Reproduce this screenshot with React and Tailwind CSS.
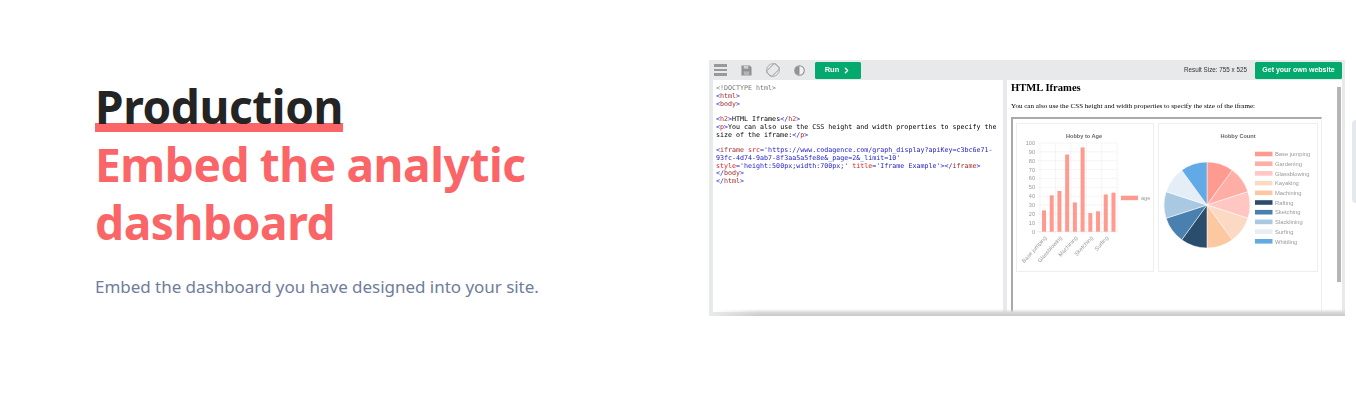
import { ChevronRight } from "lucide-react";

const sans = "font-['Noto_Sans','Open_Sans',sans-serif]";

const ageBars = [24, 41, 46, 87, 33, 95, 21, 23, 42, 44];
const ticks = [100, 90, 80, 70, 60, 50, 40, 30, 20, 10, 0];
const xLabels = [
  { name: "Base jumping", i: 0 },
  { name: "Glassblowing", i: 2 },
  { name: "Machining", i: 4 },
  { name: "Sketching", i: 6 },
  { name: "Surfing", i: 8 },
];

const slices = [
  ["Base jumping", "#fe9a8f"],
  ["Gardening", "#ffaea5"],
  ["Glassblowing", "#ffc6c2"],
  ["Kayaking", "#fbd9c3"],
  ["Machining", "#fcc8a2"],
  ["Rafting", "#2a4d6e"],
  ["Sketching", "#4a80ae"],
  ["Slacklining", "#a9c8e2"],
  ["Surfing", "#e5eef6"],
  ["Whittling", "#62aae6"],
];

function BarChart() {
  const x0 = 23;
  const y0 = 107.7;
  const h = 88.7;
  const step = 15.44;
  return (
    <svg viewBox="0 0 136 147" className="w-[136px] h-[147px] block">
      <text x="67" y="14" textAnchor="middle" fontSize="5.6" fontWeight="700" fill="#666" fontFamily="Liberation Sans">Hobby to Age</text>
      {ticks.map((t, i) => (
        <g key={t}>
          <line x1={x0 - 3} x2={x0 + 77} y1={y0 - h + i * 8.87} y2={y0 - h + i * 8.87} stroke={t === 0 ? "#ddd" : "#eee"} strokeWidth="0.6" />
          <text x={x0 - 5} y={y0 - h + i * 8.87 + 2} textAnchor="end" fontSize="5.6" fill="#999" fontFamily="Liberation Sans">{t}</text>
        </g>
      ))}
      {[0, 1, 2, 3, 4, 5].map((i) => (
        <line key={i} x1={x0 + i * step} x2={x0 + i * step} y1={y0 - h} y2={y0 + 2} stroke="#eee" strokeWidth="0.6" />
      ))}
      {ageBars.map((v, i) => (
        <rect key={i} x={x0 + 2 + i * 7.72} y={y0 - (v / 100) * h} width="4" height={(v / 100) * h} fill="#fe9a8f" />
      ))}
      {xLabels.map((l) => (
        <text
          key={l.name}
          transform={`translate(${x0 + 7 + l.i * 7.72} 114) rotate(-48)`}
          textAnchor="end"
          fontSize="5.6"
          fill="#999"
          fontFamily="Liberation Sans"
        >
          {l.name}
        </text>
      ))}
      <rect x="104" y="71.7" width="17" height="4.5" fill="#fe9a8f" />
      <text x="124" y="76" fontSize="5.6" fill="#999" fontFamily="Liberation Sans">age</text>
    </svg>
  );
}

function PieChart() {
  const cx = 48;
  const cy = 81;
  const r = 43;
  return (
    <svg viewBox="0 0 158 147" className="w-[158px] h-[147px] block">
      <text x="79" y="14" textAnchor="middle" fontSize="5.6" fontWeight="700" fill="#666" fontFamily="Liberation Sans">Hobby Count</text>
      {slices.map(([name, color], i) => {
        const a0 = (i / 10) * 2 * Math.PI - Math.PI / 2;
        const a1 = ((i + 1) / 10) * 2 * Math.PI - Math.PI / 2;
        const d = `M${cx} ${cy}L${cx + r * Math.cos(a0)} ${cy + r * Math.sin(a0)}A${r} ${r} 0 0 1 ${cx + r * Math.cos(a1)} ${cy + r * Math.sin(a1)}Z`;
        return <path key={name} d={d} fill={color} stroke="#fff" strokeWidth="0.5" />;
      })}
      {slices.map(([name, color], i) => (
        <g key={name}>
          <rect x="96" y={27.7 + i * 9.7} width="17.5" height="4.6" fill={color} />
          <text x="116" y={32.2 + i * 9.7} fontSize="5.8" fill="#999" fontFamily="Liberation Sans">{name}</text>
        </g>
      ))}
    </svg>
  );
}

function EditorPane() {
  return (
    <pre className="h-full bg-white pl-[3px] pt-[5px] font-['DejaVu_Sans_Mono',monospace] text-[6.67px] leading-[7.77px] text-black whitespace-pre overflow-hidden">
      <span className="text-[#777]">&lt;!DOCTYPE html&gt;</span>{"\n"}
      <span className="text-[#2222cc]">&lt;<span className="text-[#a52a2a]">html</span>&gt;</span>{"\n"}
      <span className="text-[#2222cc]">&lt;<span className="text-[#a52a2a]">body</span>&gt;</span>{"\n\n"}
      <span className="text-[#2222cc]">&lt;<span className="text-[#a52a2a]">h2</span>&gt;</span>HTML Iframes<span className="text-[#2222cc]">&lt;/<span className="text-[#a52a2a]">h2</span>&gt;</span>{"\n"}
      <span className="text-[#2222cc]">&lt;<span className="text-[#a52a2a]">p</span>&gt;</span>You can also use the CSS height and width properties to specify the{"\n"}size of the iframe:<span className="text-[#2222cc]">&lt;/<span className="text-[#a52a2a]">p</span>&gt;</span>{"\n\n"}
      <span className="text-[#2222cc]">&lt;<span className="text-[#a52a2a]">iframe</span> <span className="text-[#e02020]">src</span>='https://www.codagence.com/graph_display?apiKey=c3bc6e71-{"\n"}93fc-4d74-9ab7-8f3aa5a5fe8e&amp;_page=2&amp;_limit=10'{"\n"}<span className="text-[#e02020]">style</span>='height:500px;width:700px;' <span className="text-[#e02020]">title</span>='Iframe Example'&gt;&lt;/<span className="text-[#a52a2a]">iframe</span>&gt;{"\n"}&lt;/<span className="text-[#a52a2a]">body</span>&gt;{"\n"}&lt;/<span className="text-[#a52a2a]">html</span>&gt;</span>
    </pre>
  );
}

function TryitShot() {
  return (
    <div className="relative w-[636px] h-[256px] bg-[#e7e9eb] flex flex-col overflow-hidden blur-[0.3px]">
      {/* toolbar */}
      <div className="h-[20px] shrink-0 flex items-center pl-[5px] pr-[3px]">
        <div className="w-[13px] flex flex-col gap-[2px]">
          <div className="h-[2.5px] bg-[#999]" />
          <div className="h-[2.5px] bg-[#999]" />
          <div className="h-[2.5px] bg-[#999]" />
        </div>
        <svg viewBox="0 0 12 12" className="w-[11px] h-[11px] ml-[14px]">
          <path d="M0.5 0.5h9l2 2v9h-11z" fill="#929292" />
          <rect x="3" y="1" width="5" height="3" fill="#cfcfcf" />
          <rect x="3" y="7" width="6" height="4" fill="#b5b5b5" />
        </svg>
        <svg viewBox="0 0 14 14" className="w-[14px] h-[14px] ml-[14px]" fill="none" stroke="#adadad" strokeWidth="1">
          <circle cx="7" cy="7" r="6.3" />
          <rect x="3.2" y="1" width="7.6" height="12" transform="rotate(45 7 7)" />
        </svg>
        <svg viewBox="0 0 12 12" className="w-[11px] h-[11px] ml-[14px]">
          <circle cx="6" cy="6" r="5.2" fill="#f2f2f2" stroke="#929292" strokeWidth="1.2" />
          <path d="M6 1a5 5 0 0 0 0 10z" fill="#929292" />
        </svg>
        <div className="ml-[10px] w-[46px] h-[17px] bg-[#04aa6d] rounded-[1.5px] flex items-center justify-center gap-[3px] text-white text-[7.5px] font-bold font-['Liberation_Sans',sans-serif]">
          Run
          <ChevronRight className="w-[9px] h-[9px]" strokeWidth={3.5} />
        </div>
        <span className="ml-auto mr-[8px] text-[6.3px] text-[#333] font-['Liberation_Sans',sans-serif]">Result Size: 755 x 525</span>
        <div className="w-[87px] h-[17px] bg-[#04aa6d] rounded-[1.5px] flex items-center justify-center text-white text-[7px] font-bold font-['Liberation_Sans',sans-serif]">
          Get your own website
        </div>
      </div>
      {/* panes */}
      <div className="flex-1 min-h-0 flex pl-[4px] pr-[3px] pb-[4px] gap-[4px]">
        <div className="w-[290px] shrink-0">
          <EditorPane />
        </div>
        <div className="flex-1 bg-white pl-[4px] flex overflow-hidden">
          <div className="w-[311px] shrink-0 font-['Liberation_Serif',serif] text-black">
            <h2 className="text-[10.6px] font-bold leading-[14px] pt-[1px]">HTML Iframes</h2>
            <p className="text-[7.07px] leading-[9px] mt-[7px]">You can also use the CSS height and width properties to specify the size of the iframe:</p>
            <div className="mt-[6px] border-t-2 border-l-2 border-r border-t-[#aaa] border-l-[#aaa] border-r-[#eee] h-[200px] flex gap-[4px] pl-[3px] pt-[4px]">
              <div className="w-[138px] h-[149px] border border-[#eee]"><BarChart /></div>
              <div className="w-[160px] h-[149px] border border-[#eee]"><PieChart /></div>
            </div>
          </div>
          <div className="flex-1 flex justify-end pt-[7px] pb-[30px] pr-[1px]">
            <div className="w-[4px] bg-[#b5b5b5]" />
          </div>
        </div>
      </div>
      {/* bottom edge shadow of the screenshot */}
      <div className="absolute left-[4px] right-0 bottom-0 h-[7px] bg-gradient-to-t from-[#c8c8c8] via-[#d8d8d8] to-transparent [mask-image:linear-gradient(to_right,transparent,black_45px)]" />
    </div>
  );
}

export default function App() {
  return (
    <div className="w-[1356px] h-[416px] bg-white overflow-hidden relative">
      <div className="flex items-start pl-[95px] pt-[60px]">
        <div className="w-[614px] shrink-0">
          <h1 className={`${sans} text-[46px] leading-[58px] font-bold tracking-[-0.4px] [word-spacing:-1px] mt-[17px]`}>
            <span className="text-[#242424] underline decoration-[#fa6568] decoration-[9px] underline-offset-[-1px] [text-decoration-skip-ink:none]">Production</span>
            <br />
            <span className="text-[#fa6568]">Embed the analytic<br />dashboard</span>
          </h1>
          <p className={`${sans} text-[17px] leading-[28px] text-[#6f7d9b] tracking-[-0.03px] mt-[22px]`}>Embed the dashboard you have designed into your site.</p>
        </div>
        <TryitShot />
      </div>
      <div className="absolute right-0 top-[120px] w-[4px] h-[83px] bg-[#e5e9ee] rounded-l-[4px]" />
    </div>
  );
}
